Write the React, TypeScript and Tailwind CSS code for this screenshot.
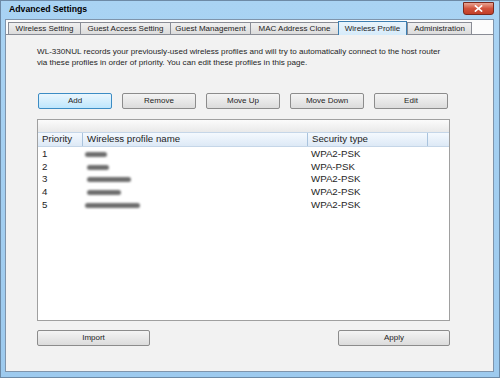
import React from 'react'

const tabs = [
  { label: 'Wireless Setting', w: 72 },
  { label: 'Guest Access Setting', w: 90 },
  { label: 'Guest Management', w: 80 },
  { label: 'MAC Address Clone', w: 88 },
  { label: 'Wireless Profile', w: 69, active: true },
  { label: 'Administration', w: 65 },
]

const profiles = [
  { p: '1', name: [0, 22], sec: 'WPA2-PSK' },
  { p: '2', name: [2, 22], sec: 'WPA-PSK' },
  { p: '3', name: [2, 44], sec: 'WPA2-PSK' },
  { p: '4', name: [2, 34], sec: 'WPA2-PSK' },
  { p: '5', name: [0, 55], sec: 'WPA2-PSK' },
]

function Btn({ label, w, primary }: { label: string; w: number; primary?: boolean }) {
  return (
    <button
      className={`h-[16px] rounded-[2px] border text-[8px] text-[#1e1e1e] flex items-center justify-center ${
        primary
          ? 'border-[#3c8cc4] bg-gradient-to-b from-[#eaf6fd] to-[#bee6fd]'
          : 'border-[#8c8c8c] bg-gradient-to-b from-[#f4f4f4] to-[#dcdcdc]'
      }`}
      style={{ width: w }}
    >
      {label}
    </button>
  )
}

export default function App() {
  return (
    <div
      className="w-[500px] h-[378px] flex flex-col bg-gradient-to-b from-[#a9d3f3] to-[#9dcaee] border border-[#6d8aa6] pl-[4px] pr-[5px] pb-[5px]"
      style={{ fontFamily: '"Liberation Sans", Arial, sans-serif' }}
    >
      {/* title bar */}
      <div className="h-[18px] flex items-center justify-between">
        <span className="pl-[4px] text-[8.7px] font-bold text-black">Advanced Settings</span>
        <div className="mt-[-3px] w-[31px] h-[13px] rounded-b-[3px] border border-[#7a2a1e] bg-gradient-to-b from-[#e8a493] via-[#d1533c] to-[#c23f28] flex items-center justify-center">
          <svg viewBox="0 0 10 8" width="9" height="7">
            <path d="M1.5 1 L8.5 7 M8.5 1 L1.5 7" stroke="white" strokeWidth="1.8" strokeLinecap="square" />
          </svg>
        </div>
      </div>

      {/* client area */}
      <div className="flex-1 flex flex-col border border-[#7f94ab] bg-[#fcfcfc]">
        {/* tabs */}
        <div className="h-[14px] flex items-end pl-[2px]">
          {tabs.map((t) =>
            t.active ? (
              <div
                key={t.label}
                className="h-[14px] mb-[-1px] border border-b-0 border-[#3c7fb1] bg-gradient-to-b from-[#e8f4fc] to-[#d6ebfa] text-[8px] text-[#1e1e1e] flex items-center justify-center z-10"
                style={{ width: t.w }}
              >
                {t.label}
              </div>
            ) : (
              <div
                key={t.label}
                className="h-[12px] border border-b-0 border-r-0 last:border-r border-[#898c95] bg-gradient-to-b from-[#f0f0f0] to-[#dcdcdc] text-[8px] text-[#1e1e1e] flex items-center justify-center"
                style={{ width: t.w }}
              >
                {t.label}
              </div>
            )
          )}
        </div>

        {/* panel */}
        <div className="flex-1 border-t border-[#898c95] bg-[#f2f2f2] pl-[31px] flex flex-col">
          <p className="mt-[12px] text-[8.1px] leading-[10.5px] text-[#1e1e1e] whitespace-nowrap">
            WL-330NUL records your previously-used wireless profiles and will try to automatically connect to the host router
            <br />
            via these profiles in order of priority. You can edit these profiles in this page.
          </p>

          <div className="mt-[25px] flex gap-[10px] pl-[1px]">
            <Btn label="Add" w={74} primary />
            <Btn label="Remove" w={74} />
            <Btn label="Move Up" w={74} />
            <Btn label="Move Down" w={74} />
            <Btn label="Edit" w={74} />
          </div>

          {/* list */}
          <div className="mt-[10px] w-[413px] h-[202px] border border-[#a0a0a0] bg-white flex flex-col">
            <div className="h-[12px] bg-gradient-to-b from-[#fbfbfb] to-[#e9e9e9]" />
            <div className="h-[15px] flex bg-gradient-to-b from-[#f4f9fe] to-[#dde9f6] border-y border-[#c5d6e8] text-[9.7px] text-[#1e1e1e]">
              <div className="w-[45px] pl-[4px] flex items-center border-r border-[#a9c3dd]">Priority</div>
              <div className="w-[225px] pl-[4px] flex items-center border-r border-[#a9c3dd]">Wireless profile name</div>
              <div className="w-[120px] pl-[4px] flex items-center border-r border-[#a9c3dd]">Security type</div>
              <div className="flex-1" />
            </div>
            <div className="pt-[1px] text-[9.7px] text-[#1e1e1e]">
              {profiles.map((r) => (
                <div key={r.p} className="h-[12.7px] flex items-center">
                  <div className="w-[45px] pl-[4px]">{r.p}</div>
                  <div className="w-[225px] pl-[2px] flex items-center">
                    <div
                      className="h-[5px] rounded-full bg-[#6e6e6e] blur-[1.2px]"
                      style={{ marginLeft: r.name[0], width: r.name[1] }}
                    />
                  </div>
                  <div className="w-[120px] pl-[3px]">{r.sec}</div>
                </div>
              ))}
            </div>
          </div>

          <div className="mt-[9px] w-[413px] flex justify-between">
            <Btn label="Import" w={113} />
            <Btn label="Apply" w={112} />
          </div>
        </div>
      </div>
    </div>
  )
}
